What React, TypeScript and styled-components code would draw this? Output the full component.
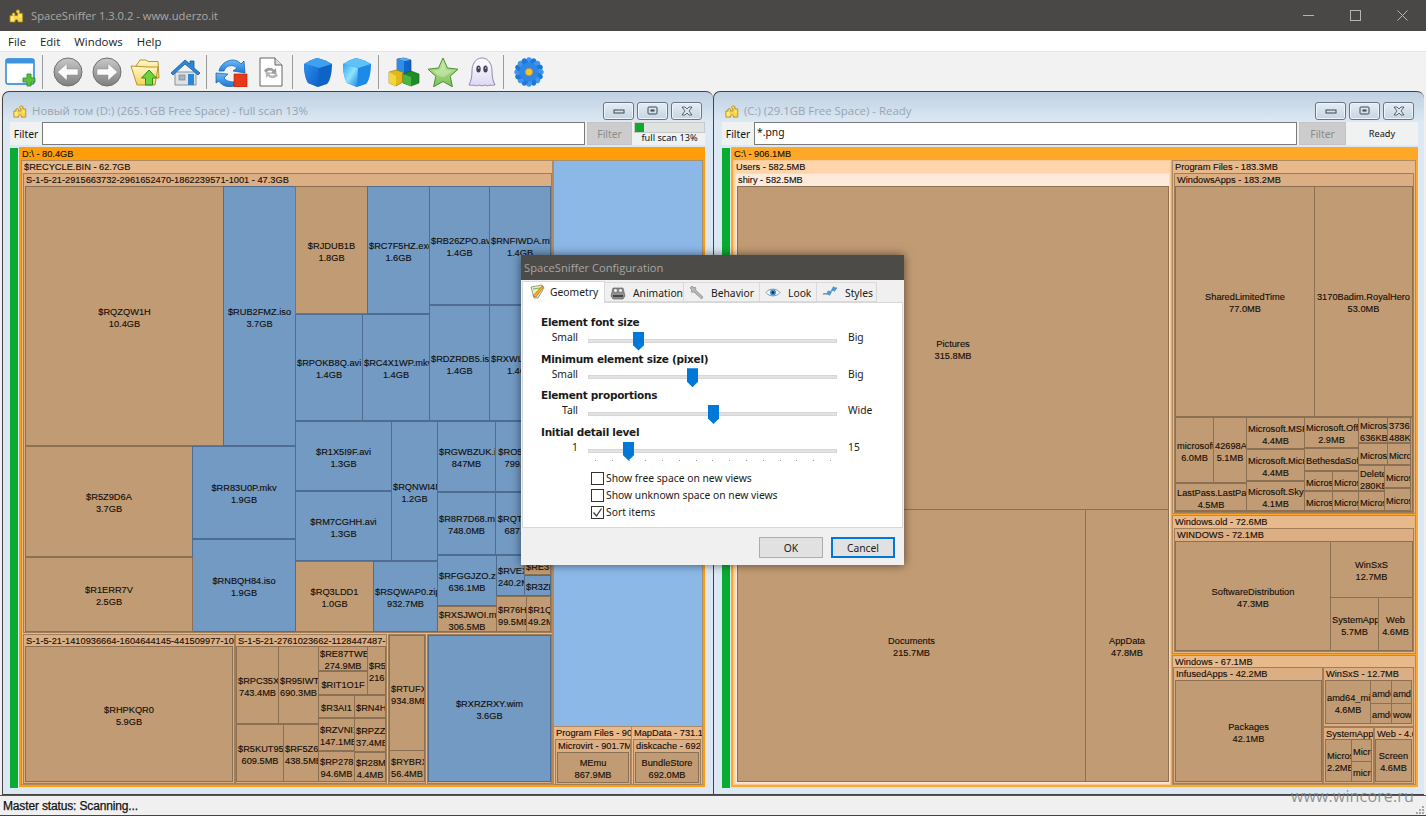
import React from "react";
import styled, { createGlobalStyle } from "styled-components";

const uiFont = `"Noto Sans", "Liberation Sans", Arial, sans-serif`;
const boldFont = `"DejaVu Sans", Verdana, sans-serif`;
const tileFont = `"Liberation Sans", Arial, sans-serif`;

const Global = createGlobalStyle`
  html, body { margin: 0; padding: 0; background: #4a4846; }
  * { box-sizing: border-box; }
`;

const Page = styled.div`
  position: relative;
  width: 1426px;
  height: 816px;
  overflow: hidden;
  display: flex;
  flex-direction: column;
  background: #f0f0f0;
  font-family: ${uiFont};
  color: #111;
`;

/* ---------- window chrome ---------- */
const TitleBar = styled.div`
  height: 31px;
  flex: none;
  background: #4a4846;
  display: flex;
  align-items: center;
  padding-left: 9px;
  color: #a9a8a5;
  font: 11.200px "Open Sans", sans-serif;
`;
const TitleText = styled.span`
  margin-left: 7px;
  flex: 1;
`;
const CaptionButtons = styled.div`
  display: flex;
  height: 31px;
`;
const CaptionButton = styled.div`
  width: 47px;
  height: 31px;
  display: flex;
  align-items: center;
  justify-content: center;
`;
const MenuBar = styled.div`
  height: 21px;
  flex: none;
  background: #fff;
  display: flex;
  align-items: center;
  padding-left: 8px;
  gap: 14px;
  font: 11.400px "Open Sans", sans-serif;
  color: #222;
  border-bottom: 1px solid #e6e6e6;
`;
const Toolbar = styled.div`
  height: 39px;
  flex: none;
  display: flex;
  align-items: center;
  background: #f2f2f2;
  padding-left: 1px;
`;
const ToolSlot = styled.div`
  width: 39px;
  height: 36px;
  display: flex;
  align-items: center;
  justify-content: center;
`;
const ToolSep = styled.div`
  width: 1px;
  height: 34px;
  background: #9a9a9a;
  margin: 0 5px 0 2px;
`;
const Workspace = styled.div`
  flex: 1;
  min-height: 0;
  display: flex;
  padding: 0 2px;
  background: #f0f0f0;
`;
const StatusBar = styled.div`
  height: 21px;
  flex: none;
  background: #f0f0f0;
  border-top: 1px solid #555;
  border-bottom: 1px solid #444;
  display: flex;
  align-items: center;
  padding: 1px 0 0 3px;
  font: 12px "Liberation Sans", sans-serif;
  -webkit-text-stroke: 0.25px #111;
  letter-spacing: -0.15px;
`;
const Watermark = styled.div`
  position: absolute;
  right: 12px;
  top: 785px;
  color: rgba(125, 128, 132, 0.85);
  font: 16px "Open Sans", sans-serif;
  letter-spacing: 0.15px;
`;
const Grip = styled.svg`
  position: absolute;
  right: 1px;
  bottom: 1px;
`;

/* ---------- child window ---------- */
const Panel = styled.section<{ $w: number; $pad: number }>`
  width: ${(p) => p.$w}px;
  flex: none;
  border: 1px solid #444;
  border-right: 0;
  border-top-left-radius: 7px;
  border-top-right-radius: 7px;
  background: linear-gradient(#bfd0e1, #dce9f4 30px);
  padding-left: ${(p) => p.$pad}px;
  display: flex;
  flex-direction: column;
`;
const PanelHead = styled.div<{ $right: number }>`
  height: 30px;
  flex: none;
  display: flex;
  align-items: center;
  padding: 7px ${(p) => p.$right}px 0 3px;
  color: #9aa4ae;
  font: 11.400px "Open Sans", sans-serif;
`;
const PanelTitle = styled.span`
  margin-left: 5px;
  flex: 1;
`;
const WinButtons = styled.div`
  display: flex;
  gap: 3px;
`;
const WinButton = styled.div`
  width: 31px;
  height: 18px;
  border: 1px solid #667687;
  border-radius: 3px;
  background: linear-gradient(#e4edf6, #c6d4e2);
  box-shadow: inset 0 0 0 1px #eef4fa;
  display: flex;
  align-items: center;
  justify-content: center;
`;
const FilterRow = styled.div<{ $right: number }>`
  height: 23px;
  flex: none;
  margin-right: ${(p) => p.$right}px;
  display: flex;
  align-items: stretch;
  background: #f0f1f1;
  font: 10.300px ${uiFont};
`;
const FilterLabel = styled.div<{ $w: number }>`
  width: ${(p) => p.$w}px;
  flex: none;
  display: flex;
  align-items: center;
  justify-content: center;
`;
const FilterInput = styled.div`
  flex: 1;
  background: #fff;
  border: 1px solid #7a7a7a;
  padding: 2px 2px;
`;
const FilterButton = styled.div<{ $w: number }>`
  width: ${(p) => p.$w}px;
  flex: none;
  margin-left: 2px;
  background: #cccccc;
  color: #8b8b8b;
  border: 1px solid #c4c4c4;
  display: flex;
  align-items: center;
  justify-content: center;
`;
const Progress = styled.div`
  width: 71px;
  flex: none;
  margin-left: 2px;
  display: flex;
  flex-direction: column;
  font-size: 9.200px;
  text-align: center;
`;
const ProgressTrack = styled.div`
  height: 11px;
  background: #dfe3df;
  border: 1px solid #c9c9c9;
  flex: none;
`;
const ProgressFill = styled.div`
  height: 100%;
  background: #0da832;
`;
const ProgressText = styled.div`
  line-height: 10px;
`;
const StateText = styled.div`
  width: 72px;
  flex: none;
  display: flex;
  align-items: center;
  justify-content: center;
  font-size: 9.200px;
`;
const ScanArea = styled.div`
  flex: none;
  margin-top: 2px;
  height: 641px;
  display: flex;
  gap: 1px;
`;
const GreenStrip = styled.div`
  width: 8px;
  flex: none;
  margin-top: 1px;
  background: #0aab33;
`;
const Treemap = styled.div<{ $w: number }>`
  position: relative;
  width: ${(p) => p.$w}px;
  flex: none;
`;

const kinds: Record<string, { bg: string; line: string }> = {
  root: { bg: "#ff9d0a", line: "#ff9d0a" },
  rootR: { bg: "#ffa727", line: "#ffa727" },
  c1: { bg: "#e8b98b", line: "#b08a60" },
  c2: { bg: "#dbae84", line: "#a17e5a" },
  u1: { bg: "#fed5aa", line: "#f7c898" },
  u2: { bg: "#feeadb", line: "#fbdcc0" },
  file: { bg: "#c19b73", line: "#8b7053" },
  blue: { bg: "#729ac3", line: "#4f6d90" },
  free: { bg: "#8cb8e8", line: "#a98f6c" },
};

const Tile = styled.div<{ $kind: string; $head: boolean }>`
  position: absolute;
  overflow: hidden;
  background: ${(p) => kinds[p.$kind].bg};
  border: 1px solid ${(p) => kinds[p.$kind].line};
  display: flex;
  flex-direction: column;
  justify-content: ${(p) => (p.$head ? "flex-start" : "center")};
  font: 9.250px/12px ${tileFont};
  color: #120d08;
  -webkit-text-stroke: 0.12px #120d08;
  padding: ${(p) => (p.$head ? "0 0 0 2px" : "3px 1px 0")};
  text-align: ${(p) => (p.$head ? "left" : "center")};
  white-space: nowrap;
`;

type Row = [number, number, number, number, string, string?];

const leftTiles: Row[] = [
  [19, 147, 705, 787, "root", "D:\\ - 80.4GB"],
  [21, 160, 553, 785, "c1", "$RECYCLE.BIN - 62.7GB"],
  [23, 173, 552, 633, "c2", "S-1-5-21-2915663732-2961652470-1862239571-1001 - 47.3GB"],
  [25, 186, 224, 446, "file", "$RQZQW1H|10.4GB"],
  [223, 186, 296, 446, "blue", "$RUB2FMZ.iso|3.7GB"],
  [295, 186, 368, 314, "file", "$RJDUB1B|1.8GB"],
  [367, 186, 430, 314, "blue", "$RC7F5HZ.exe|1.6GB"],
  [429, 186, 490, 305, "blue", "$RB26ZPO.avi|1.4GB"],
  [489, 186, 551, 305, "blue", "$RNFIWDA.mkv|1.4GB"],
  [295, 314, 363, 421, "blue", "$RPOKB8Q.avi|1.4GB"],
  [362, 314, 430, 421, "blue", "$RC4X1WP.mkv|1.4GB"],
  [429, 305, 490, 421, "blue", "$RDZRDB5.iso|1.4GB"],
  [489, 305, 551, 421, "blue", "$RXWLGD.iso|1.4GB"],
  [295, 421, 392, 491, "blue", "$R1X5I9F.avi|1.3GB"],
  [295, 491, 392, 561, "blue", "$RM7CGHH.avi|1.3GB"],
  [391, 421, 438, 561, "blue", "$RQNWI4N|1.2GB"],
  [437, 421, 496, 492, "blue", "$RGWBZUK.iso|847MB"],
  [495, 421, 551, 492, "blue", "$RO5JK.iso|799.1MB"],
  [437, 492, 496, 555, "blue", "$R8R7D68.mkv|748.0MB"],
  [495, 492, 551, 555, "blue", "$RQTX.mkv|687.2MB"],
  [437, 555, 497, 606, "blue", "$RFGGJZO.zip|636.1MB"],
  [496, 555, 525, 596, "blue", "$RVEXY|240.2MB"],
  [524, 555, 551, 575, "file", "$RE3"],
  [524, 575, 551, 596, "blue", "$R3ZK"],
  [496, 596, 527, 632, "file", "$R76HX|99.5MB"],
  [526, 596, 551, 632, "file", "$R1QX|49.2MB"],
  [437, 606, 497, 632, "file", "$RXSJWOI.mkv|306.5MB"],
  [295, 561, 374, 632, "file", "$RQ3LDD1|1.0GB"],
  [373, 561, 438, 632, "blue", "$RSQWAP0.zip|932.7MB"],
  [25, 446, 193, 557, "file", "$R5Z9D6A|3.7GB"],
  [192, 446, 296, 539, "blue", "$RR83U0P.mkv|1.9GB"],
  [192, 539, 296, 632, "blue", "$RNBQH84.iso|1.9GB"],
  [25, 557, 193, 632, "file", "$R1ERR7V|2.5GB"],
  [23, 634, 235, 784, "c2", "S-1-5-21-1410936664-1604644145-441509977-1001"],
  [25, 646, 233, 782, "file", "$RHPKQR0|5.9GB"],
  [235, 634, 387, 784, "c2", "S-1-5-21-2761023662-1128447487-5"],
  [236, 646, 279, 724, "file", "$RPC35XY|743.4MB"],
  [278, 646, 319, 724, "file", "$R95IWTU|690.3MB"],
  [236, 724, 284, 782, "file", "$R5KUT95|609.5MB"],
  [283, 724, 319, 782, "file", "$RF5Z6X|438.5MB"],
  [318, 646, 368, 671, "file", "$RE87TWE|274.9MB"],
  [367, 646, 386, 695, "file", "$R5X|216"],
  [318, 671, 368, 695, "file", "$RIT1O1F"],
  [318, 695, 355, 718, "file", "$R3AI1"],
  [354, 695, 386, 718, "file", "$RN4HX"],
  [318, 718, 355, 751, "file", "$RZVNIX|147.1MB"],
  [354, 718, 386, 752, "file", "$RPZZX|37.4MB"],
  [318, 751, 355, 782, "file", "$RP278|94.6MB"],
  [354, 752, 386, 782, "file", "$R28MX|4.4MB"],
  [388, 634, 426, 784, "c2"],
  [389, 635, 425, 751, "file", "$RTUFX|934.8MB"],
  [389, 750, 425, 782, "file", "$RYBRX|56.4MB"],
  [427, 634, 552, 784, "c2"],
  [428, 635, 551, 782, "blue", "$RXRZRXY.wim|3.6GB"],
  [553, 160, 703, 727, "free"],
  [553, 726, 632, 785, "c1", "Program Files - 901.7MB"],
  [555, 739, 631, 785, "c2", "Microvirt - 901.7MB"],
  [557, 752, 629, 783, "file", "MEmu|867.9MB"],
  [631, 726, 703, 785, "c1", "MapData - 731.1MB"],
  [633, 739, 701, 785, "c2", "diskcache - 692.0MB"],
  [635, 752, 699, 783, "file", "BundleStore|692.0MB"],
];

const rightTiles: Row[] = [
  [731, 147, 1418, 787, "rootR", "C:\\ - 906.1MB"],
  [733, 160, 1171, 785, "u1", "Users - 582.5MB"],
  [735, 173, 1170, 784, "u2", "shiry - 582.5MB"],
  [737, 186, 1169, 510, "file", "Pictures|315.8MB"],
  [737, 509, 1086, 782, "file", "Documents|215.7MB"],
  [1085, 509, 1169, 782, "file", "AppData|47.8MB"],
  [1172, 160, 1416, 514, "c1", "Program Files - 183.3MB"],
  [1174, 173, 1414, 513, "c2", "WindowsApps - 183.2MB"],
  [1175, 186, 1315, 417, "file", "SharedLimitedTime|77.0MB"],
  [1314, 186, 1413, 417, "file", "3170Badim.RoyalHero|53.0MB"],
  [1175, 417, 1413, 512, "file"],
  [1175, 417, 1214, 483, "file", "microsoft|6.0MB"],
  [1213, 417, 1247, 483, "file", "42698AX|5.1MB"],
  [1175, 483, 1247, 511, "file", "LastPass.LastPass|4.5MB"],
  [1246, 417, 1305, 449, "file", "Microsoft.MSPaint|4.4MB"],
  [1246, 449, 1305, 481, "file", "Microsoft.Microsoft|4.4MB"],
  [1246, 481, 1305, 511, "file", "Microsoft.SkypeApp|4.1MB"],
  [1304, 417, 1359, 448, "file", "Microsoft.Office|2.9MB"],
  [1304, 448, 1359, 471, "file", "BethesdaSoftworks"],
  [1304, 471, 1333, 491, "file", "Microsoft"],
  [1332, 471, 1359, 491, "file", "Microsoft"],
  [1304, 491, 1333, 511, "file", "Microsoft"],
  [1332, 491, 1359, 511, "file", "Microsoft"],
  [1358, 417, 1388, 443, "file", "Microsoft|636KB"],
  [1387, 417, 1411, 443, "file", "3736X|488KB"],
  [1358, 443, 1388, 465, "file", "Microsoft"],
  [1387, 443, 1411, 465, "file", "Microsoft"],
  [1358, 465, 1385, 491, "file", "Deleted|280KB"],
  [1384, 465, 1411, 488, "file", "Microsoft"],
  [1358, 491, 1385, 511, "file", "Microsoft"],
  [1384, 488, 1411, 511, "file", "Microsoft"],
  [1172, 515, 1416, 654, "c1", "Windows.old - 72.6MB"],
  [1174, 528, 1414, 652, "c2", "WINDOWS - 72.1MB"],
  [1175, 541, 1331, 651, "file", "SoftwareDistribution|47.3MB"],
  [1330, 541, 1413, 598, "file", "WinSxS|12.7MB"],
  [1330, 597, 1379, 651, "file", "SystemApps|5.7MB"],
  [1378, 597, 1413, 651, "file", "Web|4.6MB"],
  [1172, 655, 1416, 785, "c1", "Windows - 67.1MB"],
  [1173, 667, 1323, 784, "c2", "InfusedApps - 42.2MB"],
  [1175, 680, 1322, 782, "file", "Packages|42.1MB"],
  [1323, 667, 1414, 727, "c2", "WinSxS - 12.7MB"],
  [1325, 680, 1371, 724, "file", "amd64_microsoft|4.6MB"],
  [1370, 680, 1392, 704, "file", "amd64"],
  [1391, 680, 1412, 704, "file", "amd64"],
  [1370, 703, 1392, 724, "file", "amd64"],
  [1391, 703, 1412, 724, "file", "wow64"],
  [1323, 727, 1374, 784, "c2", "SystemApps - 5.7MB"],
  [1325, 739, 1352, 782, "file", "Microsoft|2.2MB"],
  [1351, 739, 1372, 762, "file", "Micro"],
  [1351, 761, 1372, 782, "file", "micro"],
  [1374, 727, 1414, 784, "c2", "Web - 4.6MB"],
  [1375, 739, 1412, 782, "file", "Screen|4.6MB"],
];

const TreemapView = ({ rows, ox, w }: { rows: Row[]; ox: number; w: number }) => (
  <Treemap $w={w}>
    {rows.map(([x0, y0, x1, y1, kind, text], i) => {
      const lines = (text ?? "").split("|");
      const head = !["file", "blue", "free"].includes(kind);
      return (
        <Tile
          key={i}
          $kind={kind}
          $head={head}
          style={{ left: x0 - ox, top: y0 - 147, width: x1 - x0, height: y1 - y0 }}
        >
          {lines.map((l, j) => (
            <div key={j}>{l}</div>
          ))}
        </Tile>
      );
    })}
  </Treemap>
);

/* ---------- icons ---------- */
const Puzzle = ({ s = 14 }: { s?: number }) => (
  <svg width={s} height={s} viewBox="0 0 16 16">
    <path
      d="M1 8h2.500c-1-2 .5-3 1.500-3s2 1.200 1.200 3H9V5.600C7.300 5 7.200 3 8.600 2.200 10 1.500 12 2.400 11.400 4.600c-.1.500-.3.800-.4 1h3.600V15H9.400c.8-1.600-.4-2.600-1.400-2.600S5.800 13.500 6.600 15H1z"
      fill="#f8d648"
      stroke="#a67c12"
      strokeWidth=".8"
    />
    <path d="M2 9h3v5H2zM11 7h2v3h-2z" fill="#fff2a8" opacity=".7" />
  </svg>
);

const Defs = () => (
  <svg width="0" height="0" style={{ position: "absolute" }}>
    <defs>
      <linearGradient id="gGrey" x1="0" y1="0" x2="0" y2="1">
        <stop offset="0" stopColor="#c8c8c8" />
        <stop offset="1" stopColor="#7f7f7f" />
      </linearGradient>
      <linearGradient id="gFolder" x1="0" y1="0" x2="0" y2="1">
        <stop offset="0" stopColor="#fff8c8" />
        <stop offset="1" stopColor="#f2d260" />
      </linearGradient>
      <linearGradient id="gWin" x1="0" y1="0" x2="1" y2="1">
        <stop offset="0" stopColor="#ffffff" />
        <stop offset=".6" stopColor="#ffffff" />
        <stop offset="1" stopColor="#c4daf5" />
      </linearGradient>
      <linearGradient id="gBlueTop" x1="0" y1="0" x2="0" y2="1">
        <stop offset="0" stopColor="#6cbaf7" />
        <stop offset="1" stopColor="#1a7ad8" />
      </linearGradient>
      <linearGradient id="gCubeL" x1="0" y1="0" x2="1" y2="1">
        <stop offset="0" stopColor="#2a90ee" />
        <stop offset="1" stopColor="#0f5fc4" />
      </linearGradient>
      <linearGradient id="gCyan" x1="0" y1="0" x2="1" y2="1">
        <stop offset="0" stopColor="#2fa8f0" />
        <stop offset=".5" stopColor="#8fe4ff" />
        <stop offset="1" stopColor="#1a82dd" />
      </linearGradient>
      <linearGradient id="gGreen" x1="0" y1="0" x2="0" y2="1">
        <stop offset="0" stopColor="#c8e8a8" />
        <stop offset="1" stopColor="#7bc05a" />
      </linearGradient>
      <linearGradient id="gGhost" x1="0" y1="0" x2="0" y2="1">
        <stop offset="0" stopColor="#ffffff" />
        <stop offset="1" stopColor="#ddd8f2" />
      </linearGradient>
    </defs>
  </svg>
);

const Svg = ({ w = 30, children }: { w?: number; children: React.ReactNode }) => (
  <svg width={w} height="30" viewBox={`0 0 ${w} 30`}>
    {children}
  </svg>
);

const IconNew = () => (
  <Svg w={32}>
    <rect x="1" y="2" width="28" height="25" rx="2" fill="url(#gWin)" stroke="#1f7fd2" strokeWidth="1.400" />
    <rect x="1" y="2" width="28" height="4.500" rx="1" fill="#3d95e0" />
    <path d="M22 17h4v4h4v4h-4v4h-4v-4h-4v-4h4z" fill="#58c23a" stroke="#2c8b1c" strokeWidth=".8" />
  </Svg>
);
const IconNav = ({ dir }: { dir: "l" | "r" }) => (
  <Svg>
    <circle cx="15" cy="15" r="14" fill="url(#gGrey)" stroke="#6f6f6f" />
    <path
      d={dir === "l" ? "M4.500 15L14 6.500v5.500h11v6H14v5.500z" : "M25.500 15L16 6.500v5.500H5v6h11v5.500z"}
      fill="#fbfbfb"
      stroke="#8a8a8a"
      strokeWidth=".5"
    />
  </Svg>
);
const IconFolderUp = () => (
  <Svg w={32}>
    <path d="M6 9l4-6h6l2 1.500h10L29 21H12z" fill="url(#gFolder)" stroke="#b7952f" />
    <path d="M1 9l17 1 10 0-3 18H7z" fill="url(#gFolder)" stroke="#b7952f" />
    <path d="M19 13l7.500 8h-4v7h-7v-7h-4z" fill="#6fd13f" stroke="#2f8e1e" />
  </Svg>
);
const IconHome = () => (
  <Svg>
    <path d="M5 15h21v13H5z" fill="#dfe2e4" stroke="#8c9296" />
    <path d="M1 16L15 3l5 4V4h4v7l6 5-2 2L15 7 3 18z" fill="#2e87d6" stroke="#1a5b9d" strokeWidth=".8" />
    <rect x="9" y="18" width="6" height="5" fill="#a8b4bc" stroke="#6e7a82" strokeWidth=".6" />
    <rect x="18" y="17" width="6" height="11" fill="#2b86d3" />
  </Svg>
);
const IconStop = () => (
  <Svg w={34}>
    <path d="M4 14C6 4 20-1 26 7l3-3 1 12-12-2 4-3C18 7 11 8 9 14z" fill="url(#gBlueTop)" stroke="#125ca8" strokeWidth=".7" />
    <path d="M1 16l12 1-4 4c2 3 6 4 10 4v4C12 31 6 28 4 24l-3 2z" fill="url(#gBlueTop)" stroke="#125ca8" strokeWidth=".7" />
    <rect x="19" y="17" width="13" height="13" fill="#e8391b" stroke="#a8230c" strokeWidth=".6" />
  </Svg>
);
const IconDoc = () => (
  <Svg w={26}>
    <path d="M2 1h15l7 7v21H2z" fill="#fff" stroke="#666" />
    <path d="M17 1v7h7" fill="#ddd" stroke="#666" />
    <path d="M6 14c2-4 8-4 10-1l2-2 .5 6-6-.5 2-2c-1.500-1.500-4.500-1.500-6 1z" fill="#9a9a9a" />
    <path d="M20 18c-2 4-8 4-10 1l-2 2-.5-6 6 .5-2 2c1.500 1.500 4.500 1.500 6-1z" fill="#b5b5b5" />
  </Svg>
);
const IconCube = ({ glow }: { glow?: boolean }) => (
  <Svg>
    <path
      d="M1 7c5-3 9-5 13-6 5 1 10 3 15 6 0 9-2 17-5 20l-9 3-10-4C2 21 1 14 1 7z"
      fill={glow ? "#1c8be8" : "#0e63c8"}
    />
    <path d="M1 7c5-3 9-5 13-6 5 1 10 3 15 6l-13 4z" fill={glow ? "#5ec1f7" : "#3fa0f0"} />
    <path d="M1 7l15 4 -1 19-10-4C2 21 1 14 1 7z" fill={glow ? "url(#gCyan)" : "url(#gCubeL)"} />
  </Svg>
);
const IconCubes = () => (
  <Svg w={32}>
    <path d="M9 2l7-1 7 2v12l-7 3-7-3z" fill="#1167c6" stroke="#0a3e86" strokeWidth=".6" />
    <path d="M9 2l7 2 7-1-7-2z" fill="#5cb2f3" />
    <path d="M9 2l7 2v13l-7-3z" fill="#2b8fe8" />
    <path d="M1 15l7-2 7 2v10l-7 4-7-3z" fill="#e0b81c" stroke="#8f7408" strokeWidth=".6" />
    <path d="M8 19v10L1 26V15z" fill="#f4d53a" />
    <path d="M15 17l8-3 8 3v9l-8 3-8-3z" fill="#1f8c2a" stroke="#135f18" strokeWidth=".6" />
    <path d="M23 20v9l-8-3v-9z" fill="#4cb544" />
  </Svg>
);
const IconStar = () => (
  <Svg w={32}>
    <path
      d="M16 1l4.500 10 10.500 1.200-7.800 7 2.200 10.600L16 24.500 6.600 29.800 8.800 19.200 1 12.200 11.500 11z"
      fill="url(#gGreen)"
      stroke="#4d8e31"
      strokeLinejoin="round"
    />
    <path d="M16 6l3 7 6 1-5 4-4 2-5-1.500L6 14l7-1z" fill="#e4f7c9" opacity=".4" />
  </Svg>
);
const IconGhost = () => (
  <Svg w={28}>
    <path
      d="M14 1C7 1 4 8 4 14c0 6-1 10-3 14 2 0 3 1 5 0 2 1 3 1 5 0 2 1 4 1 6 0 2 1 3 1 5 0 2 1 3 0 5 0-2-4-3-8-3-14C24 8 21 1 14 1z"
      fill="url(#gGhost)"
      stroke="#8d89ad"
    />
    <ellipse cx="10.500" cy="12" rx="2.200" ry="3.600" fill="#44415a" />
    <ellipse cx="17.500" cy="12" rx="2.200" ry="3.600" fill="#44415a" />
    <circle cx="10.800" cy="11" r=".7" fill="#dfe" />
    <circle cx="17.800" cy="11" r=".7" fill="#dfe" />
  </Svg>
);
const IconFlower = () => (
  <Svg w={32}>
    {Array.from({ length: 16 }).map((_, i) => (
      <ellipse
        key={i}
        cx="16"
        cy="4.500"
        rx="3"
        ry="4.200"
        fill={i % 2 ? "#1f78d8" : "#3b97ef"}
        transform={`rotate(${i * 22.5} 16 15)`}
      />
    ))}
    <circle cx="16" cy="15" r="9.500" fill="#2f86e4" />
    <circle cx="16" cy="15" r="3.600" fill="#f6c52c" stroke="#dc9314" strokeWidth=".6" />
  </Svg>
);

const Min = () => (
  <svg width="12" height="8">
    <rect x="1" y="3" width="10" height="3" fill="none" stroke="#3c4852" strokeWidth="1" />
  </svg>
);
const Res = () => (
  <svg width="12" height="10">
    <rect x="1" y="1" width="9" height="7" rx="1" fill="none" stroke="#3c4852" />
    <rect x="3.500" y="3.500" width="4" height="2" fill="#3c4852" />
  </svg>
);
const Cls = () => (
  <svg width="12" height="10">
    <path d="M1 1l3 0 2 2 2-2 3 0-3 4 3 4H8L6 7 4 9H1l3-4z" fill="#dfe6ee" stroke="#3c4852" strokeWidth=".8" />
  </svg>
);

/* ---------- dialog ---------- */
const Dialog = styled.div`
  position: absolute;
  left: 521px;
  top: 255px;
  width: 383px;
  height: 310px;
  background: #f0f0f0;
  box-shadow: 0 0 9px rgba(0, 0, 0, 0.55);
  display: flex;
  flex-direction: column;
  font: 10.300px ${uiFont};
  color: #1a1a1a;
`;
const DialogTitle = styled.div`
  height: 25px;
  flex: none;
  background: #4d4b48;
  color: #a6a5a2;
  font: 11.200px "Open Sans", sans-serif;
  display: flex;
  align-items: center;
  padding-left: 3px;
`;
const TabStrip = styled.div`
  height: 22px;
  flex: none;
  display: flex;
  align-items: flex-end;
  padding-left: 1px;
`;
const Tab = styled.div<{ $on?: boolean; $w: number }>`
  width: ${(p) => p.$w}px;
  height: ${(p) => (p.$on ? 22 : 20)}px;
  margin-bottom: ${(p) => (p.$on ? -1 : 0)}px;
  position: relative;
  background: ${(p) => (p.$on ? "#fff" : "#f0f0f0")};
  border: 1px solid #d9d9d9;
  border-bottom: ${(p) => (p.$on ? "0" : "1px solid #d9d9d9")};
  border-left: ${(p) => (p.$on ? "1px solid #d9d9d9" : "0")};
  display: flex;
  align-items: center;
  gap: ${(p) => (p.$on ? 5 : 7)}px;
  padding: ${(p) => (p.$on ? "0 0 2px 7px" : "1px 0 0 5px")};
`;
const Sheet = styled.div`
  height: 226px;
  flex: none;
  margin: 0 1px;
  background: #fff;
  border: 1px solid #d9d9d9;
  padding: 12px 0 0 18px;
  display: flex;
  flex-direction: column;
`;
const SliderGroup = styled.div`
  height: 36.700px;
  flex: none;
`;
const SliderHeading = styled.div`
  font: bold 10.500px/15px ${boldFont};
  letter-spacing: -0.28px;
`;
const SliderRow = styled.div`
  height: 22px;
  margin-top: -2px;
  display: grid;
  grid-template-columns: 37px 249px 1fr;
  column-gap: 10px;
  align-items: center;
`;
const SliderEnd = styled.div<{ $right?: boolean }>`
  text-align: ${(p) => (p.$right ? "right" : "left")};
  padding-left: ${(p) => (p.$right ? 0 : 1)}px;
  margin-top: -4px;
`;
const Track = styled.div`
  position: relative;
  height: 4px;
  margin-top: 3px;
  background: #e3e3e3;
  border: 1px solid #d6d6d6;
`;
const Thumb = styled.div`
  position: absolute;
  top: -8px;
  width: 11px;
  height: 19px;
  margin-left: -6px;
  background: #0078d7;
  clip-path: polygon(0 0, 100% 0, 100% 72%, 50% 100%, 0 72%);
`;
const Ticks = styled.div`
  position: absolute;
  top: 10px;
  left: 6px;
  right: 5px;
  display: flex;
  justify-content: space-between;
`;
const Tick = styled.i`
  width: 1px;
  height: 1px;
  background: #9a9a9a;
`;
const Checks = styled.div`
  margin-top: 8px;
  padding-left: 50px;
  display: flex;
  flex-direction: column;
`;
const CheckRow = styled.div`
  height: 17px;
  display: flex;
  align-items: center;
`;
const CheckBox = styled.div`
  width: 13px;
  height: 13px;
  border: 1px solid #333;
  background: #fff;
  margin-right: 2px;
  display: flex;
  align-items: center;
  justify-content: center;
`;
const DialogFooter = styled.div`
  flex: 1;
  display: flex;
  justify-content: flex-end;
  align-items: flex-start;
  gap: 8px;
  padding: 9px 9px 0 0;
`;
const DlgButton = styled.div<{ $primary?: boolean }>`
  width: 64px;
  height: 21px;
  background: #e1e1e1;
  border: ${(p) => (p.$primary ? "2px solid #0078d7" : "1px solid #adadad")};
  display: flex;
  align-items: center;
  justify-content: center;
`;

const TabGeo = () => (
  <svg width="15" height="15" viewBox="0 0 15 15">
    <path d="M1 3l11-2 2 3-6 10H4z" fill="#e9ecc8" stroke="#7e8a6a" strokeWidth=".8" />
    <path d="M3 12L12 2l1.500 1L6 13z" fill="#f2b01e" stroke="#b0521a" strokeWidth=".6" />
    <path d="M3 5l7-1" stroke="#7fb04a" strokeWidth="1" />
  </svg>
);
const TabAnim = () => (
  <svg width="16" height="15" viewBox="0 0 16 15">
    <path d="M3 3h10l2 8-2 3H3L1 11z" fill="#8f8f8f" stroke="#555" strokeWidth=".6" />
    <circle cx="5.500" cy="5.500" r="2" fill="#eee" stroke="#444" strokeWidth=".5" />
    <circle cx="10.500" cy="5.500" r="2" fill="#eee" stroke="#444" strokeWidth=".5" />
    <path d="M3 10h10v2H3z" fill="#444" />
  </svg>
);
const TabWrench = () => (
  <svg width="15" height="15" viewBox="0 0 15 15">
    <path
      d="M1 3l2-2 2 2 1-1c1 1 1 2 .5 3L14 12l-1.500 2-7.500-7C4 7.500 3 7.500 2 6.500L3 5z"
      fill="#b8b8b8"
      stroke="#777"
      strokeWidth=".6"
    />
  </svg>
);
const TabEye = () => (
  <svg width="16" height="15" viewBox="0 0 16 15">
    <path d="M1 7.500C4 3 12 3 15 7.500 12 12 4 12 1 7.500z" fill="#fff" stroke="#8398ab" />
    <circle cx="8" cy="7.500" r="3" fill="#3a8fd0" />
    <circle cx="8" cy="7.500" r="1.200" fill="#123" />
  </svg>
);
const TabStyle = () => (
  <svg width="16" height="15" viewBox="0 0 16 15">
    <path d="M1 9c3-1 3 1 6-1s3-4 8-5" fill="none" stroke="#8d8d8d" strokeWidth="1.500" />
    <rect x="5" y="6" width="4" height="4" fill="#4a9ad8" transform="rotate(30 7 8)" />
    <rect x="10" y="2" width="4" height="4" fill="#4a9ad8" transform="rotate(30 12 4)" />
  </svg>
);

const sliders = [
  { h: "Element font size", a: "Small", b: "Big", v: 50 },
  { h: "Minimum element size (pixel)", a: "Small", b: "Big", v: 104 },
  { h: "Element proportions", a: "Tall", b: "Wide", v: 125 },
  { h: "Initial detail level", a: "1", b: "15", v: 40, ticks: true },
];

const Window = ({ title, right }: { title: string; right: number }) => (
  <PanelHead $right={right}>
    <Puzzle />
    <PanelTitle>{title}</PanelTitle>
    <WinButtons>
      <WinButton><Min /></WinButton>
      <WinButton><Res /></WinButton>
      <WinButton><Cls /></WinButton>
    </WinButtons>
  </PanelHead>
);

export default function App() {
  return (
    <Page>
      <Global />
      <Defs />
      <TitleBar>
        <Puzzle s={15} />
        <TitleText>SpaceSniffer 1.3.0.2 - www.uderzo.it</TitleText>
        <CaptionButtons>
          <CaptionButton>
            <svg width="11" height="11"><path d="M0 5.500h11" stroke="#b4b4b4" /></svg>
          </CaptionButton>
          <CaptionButton>
            <svg width="11" height="11"><rect x=".5" y=".5" width="10" height="10" fill="none" stroke="#b4b4b4" /></svg>
          </CaptionButton>
          <CaptionButton>
            <svg width="11" height="11"><path d="M.5 .5l10 10M10.500 .5l-10 10" stroke="#b4b4b4" /></svg>
          </CaptionButton>
        </CaptionButtons>
      </TitleBar>
      <MenuBar>
        <span>File</span>
        <span>Edit</span>
        <span>Windows</span>
        <span>Help</span>
      </MenuBar>
      <Toolbar>
        <ToolSlot><IconNew /></ToolSlot>
        <ToolSep />
        <ToolSlot><IconNav dir="l" /></ToolSlot>
        <ToolSlot><IconNav dir="r" /></ToolSlot>
        <ToolSlot><IconFolderUp /></ToolSlot>
        <ToolSlot><IconHome /></ToolSlot>
        <ToolSep />
        <ToolSlot><IconStop /></ToolSlot>
        <ToolSlot><IconDoc /></ToolSlot>
        <ToolSep />
        <ToolSlot><IconCube /></ToolSlot>
        <ToolSlot><IconCube glow /></ToolSlot>
        <ToolSep />
        <ToolSlot><IconCubes /></ToolSlot>
        <ToolSlot><IconStar /></ToolSlot>
        <ToolSlot><IconGhost /></ToolSlot>
        <ToolSep />
        <ToolSlot><IconFlower /></ToolSlot>
      </Toolbar>
      <Workspace>
        <Panel $w={711} $pad={7}>
          <Window title="Новый том (D:) (265.1GB Free Space) - full scan 13%" right={11} />
          <FilterRow $right={8}>
            <FilterLabel $w={32}>Filter</FilterLabel>
            <FilterInput />
            <FilterButton $w={45}>Filter</FilterButton>
            <Progress>
              <ProgressTrack>
                <ProgressFill style={{ width: "13%" }} />
              </ProgressTrack>
              <ProgressText>full scan 13%</ProgressText>
            </Progress>
          </FilterRow>
          <ScanArea>
            <GreenStrip />
            <TreemapView rows={leftTiles} ox={19} w={687} />
          </ScanArea>
        </Panel>
        <Panel $w={711} $pad={8}>
          <Window title="(C:) (29.1GB Free Space) - Ready" right={10} />
          <FilterRow $right={6}>
            <FilterLabel $w={32}>Filter</FilterLabel>
            <FilterInput>*.png</FilterInput>
            <FilterButton $w={47}>Filter</FilterButton>
            <StateText>Ready</StateText>
          </FilterRow>
          <ScanArea>
            <GreenStrip />
            <TreemapView rows={rightTiles} ox={731} w={687} />
          </ScanArea>
        </Panel>
      </Workspace>
      <StatusBar>Master status: Scanning...</StatusBar>
      <Watermark>www.wincore.ru</Watermark>
      <Grip width="12" height="12" viewBox="0 0 12 12">
        <path d="M9 3h2v2H9zM6 6h2v2H6zM9 6h2v2H9zM3 9h2v2H3zM6 9h2v2H6zM9 9h2v2H9z" fill="#a8a8a8" />
      </Grip>
      <Dialog>
        <DialogTitle>SpaceSniffer Configuration</DialogTitle>
        <TabStrip>
          <Tab $on $w={83}><TabGeo />Geometry</Tab>
          <Tab $w={79}><TabAnim />Animation</Tab>
          <Tab $w={76}><TabWrench />Behavior</Tab>
          <Tab $w={57}><TabEye />Look</Tab>
          <Tab $w={60}><TabStyle />Styles</Tab>
        </TabStrip>
        <Sheet>
          {sliders.map((s) => (
            <SliderGroup key={s.h}>
              <SliderHeading>{s.h}</SliderHeading>
              <SliderRow>
                <SliderEnd $right>{s.a}</SliderEnd>
                <Track>
                  <Thumb style={{ left: s.v }} />
                  {s.ticks && (
                    <Ticks>
                      {Array.from({ length: 15 }).map((_, i) => (
                        <Tick key={i} />
                      ))}
                    </Ticks>
                  )}
                </Track>
                <SliderEnd>{s.b}</SliderEnd>
              </SliderRow>
            </SliderGroup>
          ))}
          <Checks>
            <CheckRow><CheckBox />Show free space on new views</CheckRow>
            <CheckRow><CheckBox />Show unknown space on new views</CheckRow>
            <CheckRow>
              <CheckBox>
                <svg width="11" height="11"><path d="M1.500 5.500l3 3.500 5-7.500" fill="none" stroke="#333" strokeWidth="1.200" /></svg>
              </CheckBox>
              Sort items
            </CheckRow>
          </Checks>
        </Sheet>
        <DialogFooter>
          <DlgButton>OK</DlgButton>
          <DlgButton $primary>Cancel</DlgButton>
        </DialogFooter>
      </Dialog>
    </Page>
  );
}
